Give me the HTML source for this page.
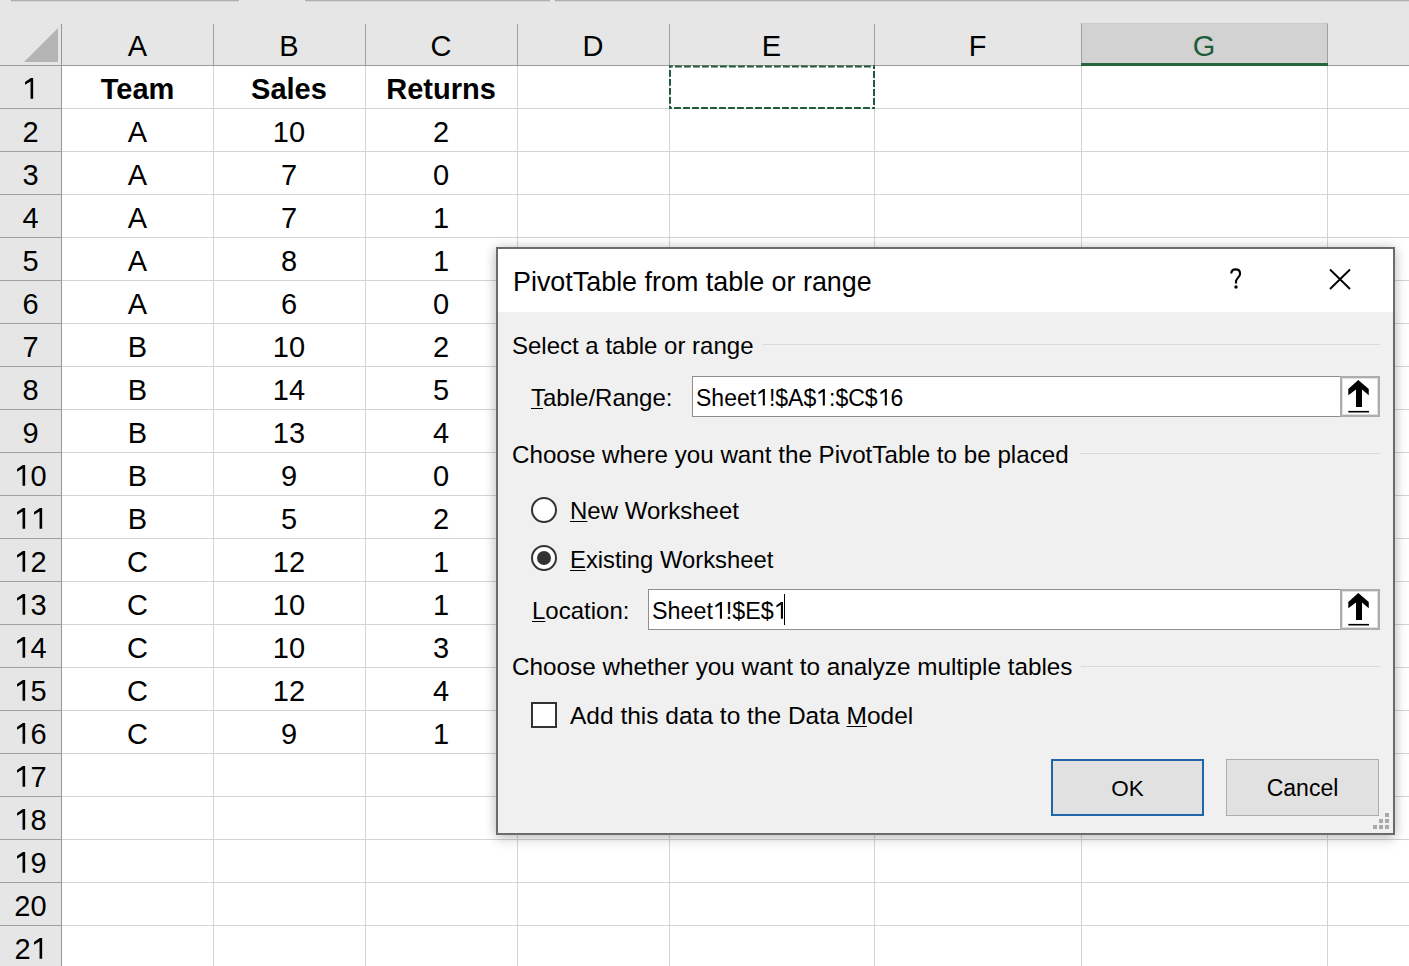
<!DOCTYPE html><html><head><meta charset="utf-8"><style>
*{margin:0;padding:0;box-sizing:border-box}
html,body{width:1409px;height:966px;overflow:hidden;background:#fff}
body{position:relative;font-family:"Liberation Sans",sans-serif;color:#000}
.a{position:absolute}
.t{position:absolute;white-space:pre;line-height:1}
u{text-decoration-thickness:1px;text-underline-offset:2px}
.hl{position:absolute;height:1px}
.vl{position:absolute;width:1px}
</style></head><body>
<div class="a" style="left:0;top:0;width:1409px;height:65px;background:#e6e6e6"></div>
<div class="hl" style="left:11px;top:0;width:228px;height:1px;background:#b0b0b0"></div>
<div class="hl" style="left:11px;top:1px;width:228px;height:1px;background:#d6d6d6"></div>
<div class="hl" style="left:305px;top:0;width:245px;height:1px;background:#b0b0b0"></div>
<div class="hl" style="left:305px;top:1px;width:245px;height:1px;background:#d6d6d6"></div>
<div class="hl" style="left:555px;top:0;width:854px;height:1px;background:#b0b0b0"></div>
<div class="hl" style="left:555px;top:1px;width:854px;height:1px;background:#d6d6d6"></div>
<div class="a" style="left:0;top:65px;width:61px;height:901px;background:#e6e6e6"></div>
<div class="a" style="left:1081px;top:23px;width:247px;height:42px;background:#d2d2d2;border:1px solid #a0a0a0;border-top-color:#cacaca;border-bottom:none"></div>
<svg class="a" style="left:0;top:0" width="62" height="65"><polygon points="24,62 58,62 58,28" fill="#b4b4b4"/></svg>
<div class="vl" style="left:213px;top:24px;height:41px;background:#a2a2a2"></div>
<div class="vl" style="left:365px;top:24px;height:41px;background:#a2a2a2"></div>
<div class="vl" style="left:517px;top:24px;height:41px;background:#a2a2a2"></div>
<div class="vl" style="left:669px;top:24px;height:41px;background:#a2a2a2"></div>
<div class="vl" style="left:874px;top:24px;height:41px;background:#a2a2a2"></div>
<div class="vl" style="left:1081px;top:24px;height:41px;background:#a2a2a2"></div>
<div class="hl" style="left:0;top:65px;width:1409px;background:#9b9b9b"></div>
<div class="a" style="left:1081px;top:63px;width:247px;height:3px;background:#26663f"></div>
<div class="vl" style="left:61px;top:24px;height:942px;background:#979797"></div>
<div class="vl" style="left:213px;top:66px;height:900px;background:#d4d4d4"></div>
<div class="vl" style="left:365px;top:66px;height:900px;background:#d4d4d4"></div>
<div class="vl" style="left:517px;top:66px;height:900px;background:#d4d4d4"></div>
<div class="vl" style="left:669px;top:66px;height:900px;background:#d4d4d4"></div>
<div class="vl" style="left:874px;top:66px;height:900px;background:#d4d4d4"></div>
<div class="vl" style="left:1081px;top:66px;height:900px;background:#d4d4d4"></div>
<div class="vl" style="left:1327px;top:66px;height:900px;background:#d4d4d4"></div>
<div class="hl" style="left:62px;top:108px;width:1347px;background:#d4d4d4"></div>
<div class="hl" style="left:0;top:108px;width:61px;background:#a0a0a0"></div>
<div class="hl" style="left:62px;top:151px;width:1347px;background:#d4d4d4"></div>
<div class="hl" style="left:0;top:151px;width:61px;background:#a0a0a0"></div>
<div class="hl" style="left:62px;top:194px;width:1347px;background:#d4d4d4"></div>
<div class="hl" style="left:0;top:194px;width:61px;background:#a0a0a0"></div>
<div class="hl" style="left:62px;top:237px;width:1347px;background:#d4d4d4"></div>
<div class="hl" style="left:0;top:237px;width:61px;background:#a0a0a0"></div>
<div class="hl" style="left:62px;top:280px;width:1347px;background:#d4d4d4"></div>
<div class="hl" style="left:0;top:280px;width:61px;background:#a0a0a0"></div>
<div class="hl" style="left:62px;top:323px;width:1347px;background:#d4d4d4"></div>
<div class="hl" style="left:0;top:323px;width:61px;background:#a0a0a0"></div>
<div class="hl" style="left:62px;top:366px;width:1347px;background:#d4d4d4"></div>
<div class="hl" style="left:0;top:366px;width:61px;background:#a0a0a0"></div>
<div class="hl" style="left:62px;top:409px;width:1347px;background:#d4d4d4"></div>
<div class="hl" style="left:0;top:409px;width:61px;background:#a0a0a0"></div>
<div class="hl" style="left:62px;top:452px;width:1347px;background:#d4d4d4"></div>
<div class="hl" style="left:0;top:452px;width:61px;background:#a0a0a0"></div>
<div class="hl" style="left:62px;top:495px;width:1347px;background:#d4d4d4"></div>
<div class="hl" style="left:0;top:495px;width:61px;background:#a0a0a0"></div>
<div class="hl" style="left:62px;top:538px;width:1347px;background:#d4d4d4"></div>
<div class="hl" style="left:0;top:538px;width:61px;background:#a0a0a0"></div>
<div class="hl" style="left:62px;top:581px;width:1347px;background:#d4d4d4"></div>
<div class="hl" style="left:0;top:581px;width:61px;background:#a0a0a0"></div>
<div class="hl" style="left:62px;top:624px;width:1347px;background:#d4d4d4"></div>
<div class="hl" style="left:0;top:624px;width:61px;background:#a0a0a0"></div>
<div class="hl" style="left:62px;top:667px;width:1347px;background:#d4d4d4"></div>
<div class="hl" style="left:0;top:667px;width:61px;background:#a0a0a0"></div>
<div class="hl" style="left:62px;top:710px;width:1347px;background:#d4d4d4"></div>
<div class="hl" style="left:0;top:710px;width:61px;background:#a0a0a0"></div>
<div class="hl" style="left:62px;top:753px;width:1347px;background:#d4d4d4"></div>
<div class="hl" style="left:0;top:753px;width:61px;background:#a0a0a0"></div>
<div class="hl" style="left:62px;top:796px;width:1347px;background:#d4d4d4"></div>
<div class="hl" style="left:0;top:796px;width:61px;background:#a0a0a0"></div>
<div class="hl" style="left:62px;top:839px;width:1347px;background:#d4d4d4"></div>
<div class="hl" style="left:0;top:839px;width:61px;background:#a0a0a0"></div>
<div class="hl" style="left:62px;top:882px;width:1347px;background:#d4d4d4"></div>
<div class="hl" style="left:0;top:882px;width:61px;background:#a0a0a0"></div>
<div class="hl" style="left:62px;top:925px;width:1347px;background:#d4d4d4"></div>
<div class="hl" style="left:0;top:925px;width:61px;background:#a0a0a0"></div>
<div class="hl" style="left:62px;top:968px;width:1347px;background:#d4d4d4"></div>
<div class="hl" style="left:0;top:968px;width:61px;background:#a0a0a0"></div>
<div class="t" style="left:37.5px;width:200px;text-align:center;top:31.5px;font-size:29px;color:#000">A</div>
<div class="t" style="left:189.0px;width:200px;text-align:center;top:31.5px;font-size:29px;color:#000">B</div>
<div class="t" style="left:341.0px;width:200px;text-align:center;top:31.5px;font-size:29px;color:#000">C</div>
<div class="t" style="left:493.0px;width:200px;text-align:center;top:31.5px;font-size:29px;color:#000">D</div>
<div class="t" style="left:671.5px;width:200px;text-align:center;top:31.5px;font-size:29px;color:#000">E</div>
<div class="t" style="left:877.5px;width:200px;text-align:center;top:31.5px;font-size:29px;color:#000">F</div>
<div class="t" style="left:1104.0px;width:200px;text-align:center;top:31.5px;font-size:29px;color:#1e5c3a">G</div>
<div class="t" style="left:0;width:61px;text-align:center;top:74.5px;font-size:29px"><svg style="width:0.556em;height:0.716em;vertical-align:baseline;fill:currentColor" viewBox="0 0 556 716"><path d="M385 0V716H295V118L105 236V140L305 0Z"/></svg></div>
<div class="t" style="left:0;width:61px;text-align:center;top:117.5px;font-size:29px">2</div>
<div class="t" style="left:0;width:61px;text-align:center;top:160.5px;font-size:29px">3</div>
<div class="t" style="left:0;width:61px;text-align:center;top:203.5px;font-size:29px">4</div>
<div class="t" style="left:0;width:61px;text-align:center;top:246.5px;font-size:29px">5</div>
<div class="t" style="left:0;width:61px;text-align:center;top:289.5px;font-size:29px">6</div>
<div class="t" style="left:0;width:61px;text-align:center;top:332.5px;font-size:29px">7</div>
<div class="t" style="left:0;width:61px;text-align:center;top:375.5px;font-size:29px">8</div>
<div class="t" style="left:0;width:61px;text-align:center;top:418.5px;font-size:29px">9</div>
<div class="t" style="left:0;width:61px;text-align:center;top:461.5px;font-size:29px"><svg style="width:0.556em;height:0.716em;vertical-align:baseline;fill:currentColor" viewBox="0 0 556 716"><path d="M385 0V716H295V118L105 236V140L305 0Z"/></svg>0</div>
<div class="t" style="left:0;width:61px;text-align:center;top:504.5px;font-size:29px"><svg style="width:0.556em;height:0.716em;vertical-align:baseline;fill:currentColor" viewBox="0 0 556 716"><path d="M385 0V716H295V118L105 236V140L305 0Z"/></svg><svg style="width:0.556em;height:0.716em;vertical-align:baseline;fill:currentColor" viewBox="0 0 556 716"><path d="M385 0V716H295V118L105 236V140L305 0Z"/></svg></div>
<div class="t" style="left:0;width:61px;text-align:center;top:547.5px;font-size:29px"><svg style="width:0.556em;height:0.716em;vertical-align:baseline;fill:currentColor" viewBox="0 0 556 716"><path d="M385 0V716H295V118L105 236V140L305 0Z"/></svg>2</div>
<div class="t" style="left:0;width:61px;text-align:center;top:590.5px;font-size:29px"><svg style="width:0.556em;height:0.716em;vertical-align:baseline;fill:currentColor" viewBox="0 0 556 716"><path d="M385 0V716H295V118L105 236V140L305 0Z"/></svg>3</div>
<div class="t" style="left:0;width:61px;text-align:center;top:633.5px;font-size:29px"><svg style="width:0.556em;height:0.716em;vertical-align:baseline;fill:currentColor" viewBox="0 0 556 716"><path d="M385 0V716H295V118L105 236V140L305 0Z"/></svg>4</div>
<div class="t" style="left:0;width:61px;text-align:center;top:676.5px;font-size:29px"><svg style="width:0.556em;height:0.716em;vertical-align:baseline;fill:currentColor" viewBox="0 0 556 716"><path d="M385 0V716H295V118L105 236V140L305 0Z"/></svg>5</div>
<div class="t" style="left:0;width:61px;text-align:center;top:719.5px;font-size:29px"><svg style="width:0.556em;height:0.716em;vertical-align:baseline;fill:currentColor" viewBox="0 0 556 716"><path d="M385 0V716H295V118L105 236V140L305 0Z"/></svg>6</div>
<div class="t" style="left:0;width:61px;text-align:center;top:762.5px;font-size:29px"><svg style="width:0.556em;height:0.716em;vertical-align:baseline;fill:currentColor" viewBox="0 0 556 716"><path d="M385 0V716H295V118L105 236V140L305 0Z"/></svg>7</div>
<div class="t" style="left:0;width:61px;text-align:center;top:805.5px;font-size:29px"><svg style="width:0.556em;height:0.716em;vertical-align:baseline;fill:currentColor" viewBox="0 0 556 716"><path d="M385 0V716H295V118L105 236V140L305 0Z"/></svg>8</div>
<div class="t" style="left:0;width:61px;text-align:center;top:848.5px;font-size:29px"><svg style="width:0.556em;height:0.716em;vertical-align:baseline;fill:currentColor" viewBox="0 0 556 716"><path d="M385 0V716H295V118L105 236V140L305 0Z"/></svg>9</div>
<div class="t" style="left:0;width:61px;text-align:center;top:891.5px;font-size:29px">20</div>
<div class="t" style="left:0;width:61px;text-align:center;top:934.5px;font-size:29px">2<svg style="width:0.556em;height:0.716em;vertical-align:baseline;fill:currentColor" viewBox="0 0 556 716"><path d="M385 0V716H295V118L105 236V140L305 0Z"/></svg></div>
<div class="t" style="left:37.5px;width:200px;text-align:center;top:74.5px;font-size:29px;font-weight:bold">Team</div>
<div class="t" style="left:189.0px;width:200px;text-align:center;top:74.5px;font-size:29px;font-weight:bold">Sales</div>
<div class="t" style="left:341.0px;width:200px;text-align:center;top:74.5px;font-size:29px;font-weight:bold">Returns</div>
<div class="t" style="left:37.5px;width:200px;text-align:center;top:117.5px;font-size:29px">A</div>
<div class="t" style="left:189.0px;width:200px;text-align:center;top:117.5px;font-size:29px">10</div>
<div class="t" style="left:341.0px;width:200px;text-align:center;top:117.5px;font-size:29px">2</div>
<div class="t" style="left:37.5px;width:200px;text-align:center;top:160.5px;font-size:29px">A</div>
<div class="t" style="left:189.0px;width:200px;text-align:center;top:160.5px;font-size:29px">7</div>
<div class="t" style="left:341.0px;width:200px;text-align:center;top:160.5px;font-size:29px">0</div>
<div class="t" style="left:37.5px;width:200px;text-align:center;top:203.5px;font-size:29px">A</div>
<div class="t" style="left:189.0px;width:200px;text-align:center;top:203.5px;font-size:29px">7</div>
<div class="t" style="left:341.0px;width:200px;text-align:center;top:203.5px;font-size:29px">1</div>
<div class="t" style="left:37.5px;width:200px;text-align:center;top:246.5px;font-size:29px">A</div>
<div class="t" style="left:189.0px;width:200px;text-align:center;top:246.5px;font-size:29px">8</div>
<div class="t" style="left:341.0px;width:200px;text-align:center;top:246.5px;font-size:29px">1</div>
<div class="t" style="left:37.5px;width:200px;text-align:center;top:289.5px;font-size:29px">A</div>
<div class="t" style="left:189.0px;width:200px;text-align:center;top:289.5px;font-size:29px">6</div>
<div class="t" style="left:341.0px;width:200px;text-align:center;top:289.5px;font-size:29px">0</div>
<div class="t" style="left:37.5px;width:200px;text-align:center;top:332.5px;font-size:29px">B</div>
<div class="t" style="left:189.0px;width:200px;text-align:center;top:332.5px;font-size:29px">10</div>
<div class="t" style="left:341.0px;width:200px;text-align:center;top:332.5px;font-size:29px">2</div>
<div class="t" style="left:37.5px;width:200px;text-align:center;top:375.5px;font-size:29px">B</div>
<div class="t" style="left:189.0px;width:200px;text-align:center;top:375.5px;font-size:29px">14</div>
<div class="t" style="left:341.0px;width:200px;text-align:center;top:375.5px;font-size:29px">5</div>
<div class="t" style="left:37.5px;width:200px;text-align:center;top:418.5px;font-size:29px">B</div>
<div class="t" style="left:189.0px;width:200px;text-align:center;top:418.5px;font-size:29px">13</div>
<div class="t" style="left:341.0px;width:200px;text-align:center;top:418.5px;font-size:29px">4</div>
<div class="t" style="left:37.5px;width:200px;text-align:center;top:461.5px;font-size:29px">B</div>
<div class="t" style="left:189.0px;width:200px;text-align:center;top:461.5px;font-size:29px">9</div>
<div class="t" style="left:341.0px;width:200px;text-align:center;top:461.5px;font-size:29px">0</div>
<div class="t" style="left:37.5px;width:200px;text-align:center;top:504.5px;font-size:29px">B</div>
<div class="t" style="left:189.0px;width:200px;text-align:center;top:504.5px;font-size:29px">5</div>
<div class="t" style="left:341.0px;width:200px;text-align:center;top:504.5px;font-size:29px">2</div>
<div class="t" style="left:37.5px;width:200px;text-align:center;top:547.5px;font-size:29px">C</div>
<div class="t" style="left:189.0px;width:200px;text-align:center;top:547.5px;font-size:29px">12</div>
<div class="t" style="left:341.0px;width:200px;text-align:center;top:547.5px;font-size:29px">1</div>
<div class="t" style="left:37.5px;width:200px;text-align:center;top:590.5px;font-size:29px">C</div>
<div class="t" style="left:189.0px;width:200px;text-align:center;top:590.5px;font-size:29px">10</div>
<div class="t" style="left:341.0px;width:200px;text-align:center;top:590.5px;font-size:29px">1</div>
<div class="t" style="left:37.5px;width:200px;text-align:center;top:633.5px;font-size:29px">C</div>
<div class="t" style="left:189.0px;width:200px;text-align:center;top:633.5px;font-size:29px">10</div>
<div class="t" style="left:341.0px;width:200px;text-align:center;top:633.5px;font-size:29px">3</div>
<div class="t" style="left:37.5px;width:200px;text-align:center;top:676.5px;font-size:29px">C</div>
<div class="t" style="left:189.0px;width:200px;text-align:center;top:676.5px;font-size:29px">12</div>
<div class="t" style="left:341.0px;width:200px;text-align:center;top:676.5px;font-size:29px">4</div>
<div class="t" style="left:37.5px;width:200px;text-align:center;top:719.5px;font-size:29px">C</div>
<div class="t" style="left:189.0px;width:200px;text-align:center;top:719.5px;font-size:29px">9</div>
<div class="t" style="left:341.0px;width:200px;text-align:center;top:719.5px;font-size:29px">1</div>
<svg class="a" style="left:0;top:0" width="1409" height="120"><g fill="none" stroke="#235a3b" stroke-dasharray="6.8 2.2"><path d="M669,66.5H875" stroke-width="1.8" stroke-dashoffset="3"/><path d="M874,65.6V109" stroke-width="2" stroke-dashoffset="3.5"/><path d="M669,108H875" stroke-width="2" stroke-dashoffset="3.9"/><path d="M670,65.6V109" stroke-width="2" stroke-dashoffset="4.7"/></g></svg>
<div class="a" style="left:496px;top:247px;width:899px;height:588px;box-shadow:0 0 11px rgba(0,0,0,0.2),0 5px 12px rgba(0,0,0,0.12)"></div>
<div class="a" style="left:496px;top:247px;width:899px;height:588px;background:#f0f0f0;border:2px solid #6b6b6b"></div>
<div class="a" style="left:498px;top:249px;width:895px;height:63px;background:#fff"></div>
<div class="t" style="left:513px;top:268.5px;font-size:26.9px;">PivotTable from table or range</div>
<svg class="a" style="left:1220px;top:262px" width="30" height="34"><path d="M11.2,11.5 C11.5,8.6 13.3,7.4 15.5,7.4 C18.3,7.4 20.1,9.2 20.1,11.8 C20.1,15 16.4,16 16,19.2 L16,21.5" fill="none" stroke="#000" stroke-width="2.1"/><circle cx="16" cy="25" r="1.7" fill="#000"/></svg>
<svg class="a" style="left:1328px;top:268px" width="24" height="23"><path d="M2,1.5 L22,21 M22,1.5 L2,21" stroke="#000" stroke-width="1.9"/></svg>
<div class="t" style="left:512px;top:333.7px;font-size:24px;">Select a table or range</div>
<div class="hl" style="left:763px;top:344px;width:617px;background:#dadada"></div>
<div class="t" style="left:531px;top:385.7px;font-size:24px;"><u>T</u>able/Range:</div>
<div class="a" style="left:692px;top:376px;width:649px;height:41px;background:#fff;border:1px solid #8e8e8e"></div>
<div class="t" style="left:696px;top:386.5px;font-size:23px;">Sheet<svg style="width:0.556em;height:0.716em;vertical-align:baseline;fill:currentColor" viewBox="0 0 556 716"><path d="M385 0V716H295V118L105 236V140L305 0Z"/></svg>!$A$<svg style="width:0.556em;height:0.716em;vertical-align:baseline;fill:currentColor" viewBox="0 0 556 716"><path d="M385 0V716H295V118L105 236V140L305 0Z"/></svg>:$C$<svg style="width:0.556em;height:0.716em;vertical-align:baseline;fill:currentColor" viewBox="0 0 556 716"><path d="M385 0V716H295V118L105 236V140L305 0Z"/></svg>6</div>
<div class="a" style="left:1340px;top:376px;width:40px;height:41px;background:#fff;border:2px solid #adadad;box-shadow:inset 0 0 0 1px #e0e0e0"></div>
<svg class="a" style="left:1340px;top:376px" width="40" height="41"><path d="M18.3,4 L28.75,13 L28.75,19.3 L22,13.5 L22,31 L16,31 L16,13.5 L8.3,19.3 L8.3,13 Z" fill="#000"/><rect x="8.3" y="34.9" width="20.7" height="1.6" fill="#000"/></svg>
<div class="t" style="left:512px;top:442.5px;font-size:24.2px;">Choose where you want the PivotTable to be placed</div>
<div class="hl" style="left:1080px;top:453px;width:300px;background:#dadada"></div>
<div class="a" style="left:531px;top:497px;width:26px;height:26px;border-radius:50%;border:2px solid #333;background:#fff"></div>
<div class="t" style="left:570px;top:499.1px;font-size:24px;"><u>N</u>ew Worksheet</div>
<div class="a" style="left:531px;top:545px;width:26px;height:26px;border-radius:50%;border:2px solid #333;background:#fff"></div>
<div class="a" style="left:537px;top:551px;width:14px;height:14px;border-radius:50%;background:#333"></div>
<div class="t" style="left:570px;top:548.3px;font-size:23.8px;"><u>E</u>xisting Worksheet</div>
<div class="t" style="left:532px;top:598.9px;font-size:24px;"><u>L</u>ocation:</div>
<div class="a" style="left:648px;top:589px;width:693px;height:41px;background:#fff;border:1px solid #8e8e8e"></div>
<div class="t" style="left:652px;top:599.5px;font-size:23.3px;">Sheet<svg style="width:0.556em;height:0.716em;vertical-align:baseline;fill:currentColor" viewBox="0 0 556 716"><path d="M385 0V716H295V118L105 236V140L305 0Z"/></svg>!$E$<svg style="width:0.556em;height:0.716em;vertical-align:baseline;fill:currentColor" viewBox="0 0 556 716"><path d="M385 0V716H295V118L105 236V140L305 0Z"/></svg></div>
<div class="a" style="left:784px;top:594px;width:1px;height:31px;background:#000"></div>
<div class="a" style="left:1340px;top:589px;width:40px;height:41px;background:#fff;border:2px solid #adadad;box-shadow:inset 0 0 0 1px #e0e0e0"></div>
<svg class="a" style="left:1340px;top:589px" width="40" height="41"><path d="M18.3,4 L28.75,13 L28.75,19.3 L22,13.5 L22,31 L16,31 L16,13.5 L8.3,19.3 L8.3,13 Z" fill="#000"/><rect x="8.3" y="34.9" width="20.7" height="1.6" fill="#000"/></svg>
<div class="t" style="left:512px;top:655.0px;font-size:24.3px;">Choose whether you want to analyze multiple tables</div>
<div class="hl" style="left:1081px;top:666px;width:299px;background:#dadada"></div>
<div class="a" style="left:531px;top:702px;width:26px;height:26px;border:2px solid #333;background:#fff"></div>
<div class="t" style="left:570px;top:703.9px;font-size:24.5px;">Add this data to the Data <u>M</u>odel</div>
<div class="a" style="left:1051px;top:759px;width:153px;height:57px;background:#e1e1e1;border:2px solid #1e66a8"></div>
<div class="t" style="left:1051px;width:153px;text-align:center;top:777.7px;font-size:22.5px">OK</div>
<div class="a" style="left:1226px;top:759px;width:153px;height:57px;background:#e1e1e1;border:1px solid #adadad"></div>
<div class="t" style="left:1226px;width:153px;text-align:center;top:777.2px;font-size:23px">Cancel</div>
<div class="a" style="left:1385px;top:813px;width:4px;height:4px;background:#a8a8a8"></div>
<div class="a" style="left:1379px;top:819px;width:4px;height:4px;background:#a8a8a8"></div>
<div class="a" style="left:1385px;top:819px;width:4px;height:4px;background:#a8a8a8"></div>
<div class="a" style="left:1373px;top:825px;width:4px;height:4px;background:#a8a8a8"></div>
<div class="a" style="left:1379px;top:825px;width:4px;height:4px;background:#a8a8a8"></div>
<div class="a" style="left:1385px;top:825px;width:4px;height:4px;background:#a8a8a8"></div>
</body></html>
